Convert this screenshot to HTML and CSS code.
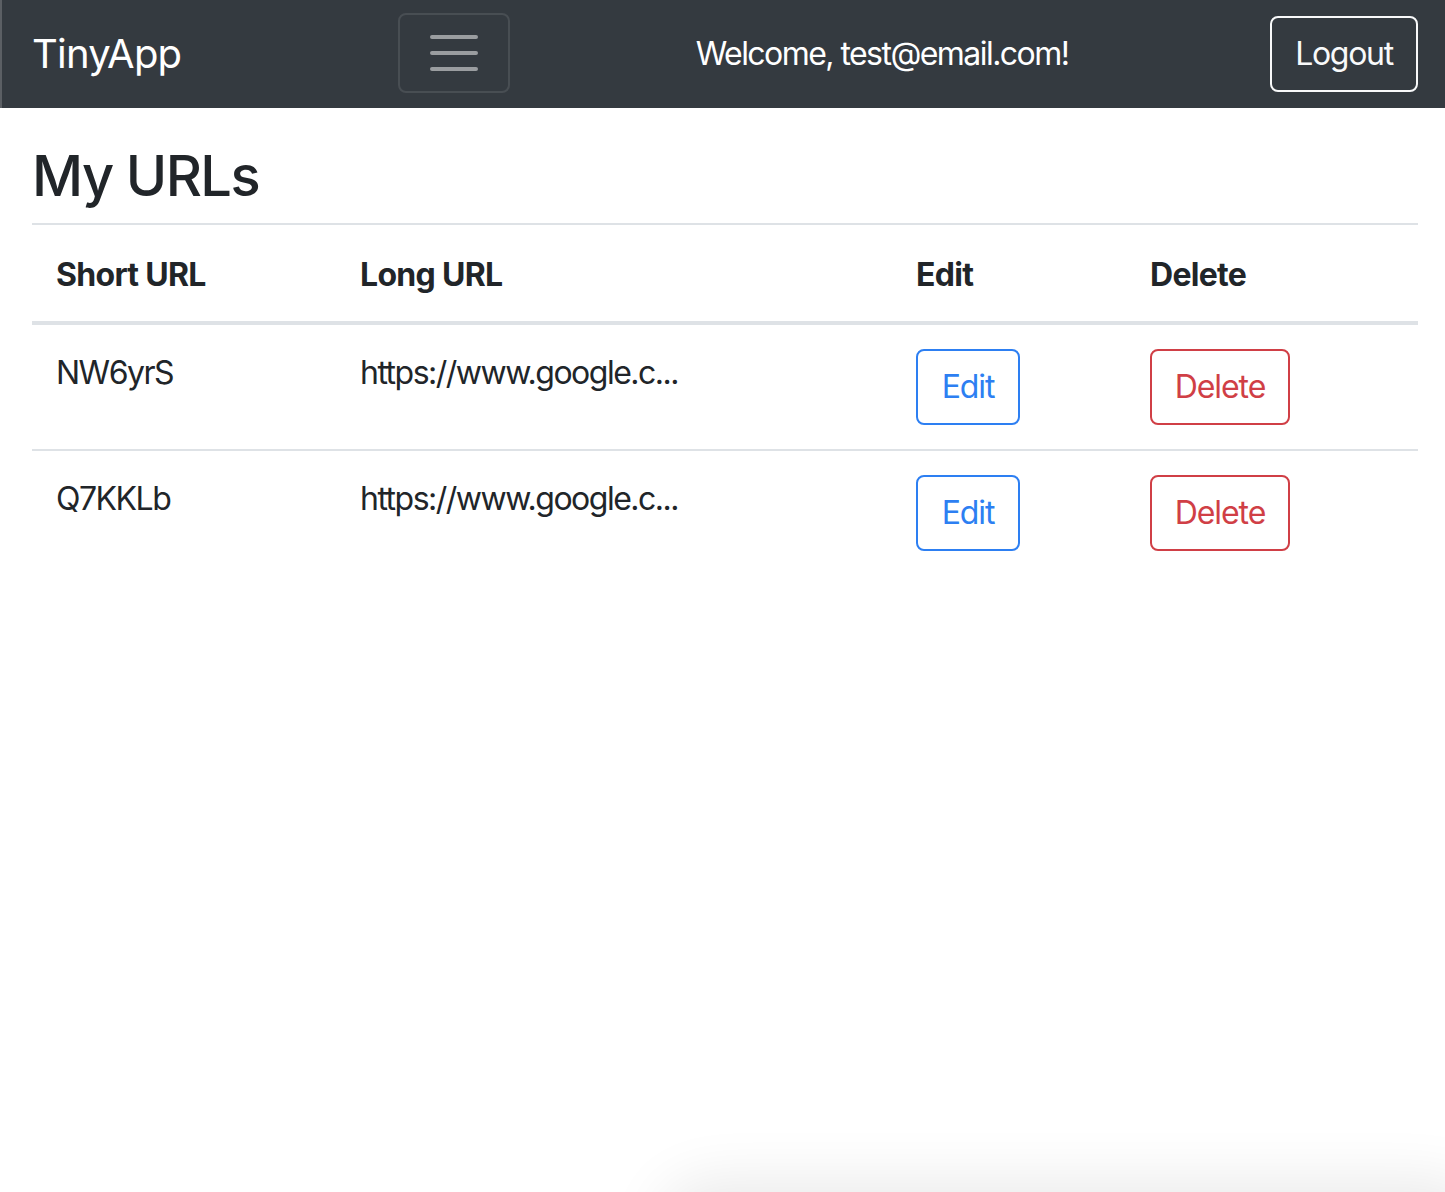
FILE: index.html
```html
<!DOCTYPE html>
<html lang="en">
<head>
<meta charset="utf-8">
<title>TinyApp</title>
<link rel="stylesheet" href="styles.css">
</head>
<body>
<nav class="navbar">
  <a class="brand" href="#">TinyApp</a>
  <button class="toggler" type="button" aria-label="Toggle navigation">
    <svg class="toggler-icon" viewBox="0 0 30 30" width="60" height="60">
      <path stroke="rgba(255,255,255,0.5)" stroke-linecap="round" stroke-miterlimit="10" stroke-width="2" d="M4 7h22M4 15h22M4 23h22"/>
    </svg>
  </button>
  <span class="welcome">Welcome, test@email.com!</span>
  <button class="btn-logout" type="button">Logout</button>
</nav>
<main class="container">
  <h2 class="title">My URLs</h2>
  <table class="table">
    <thead>
      <tr>
        <th class="c-short">Short URL</th>
        <th class="c-long">Long URL</th>
        <th class="c-edit">Edit</th>
        <th class="c-del">Delete</th>
      </tr>
    </thead>
    <tbody>
      <tr>
        <td>NW6yrS</td>
        <td>https://www.google.c...</td>
        <td><button class="btn btn-primary" type="button">Edit</button></td>
        <td><button class="btn btn-danger" type="button">Delete</button></td>
      </tr>
      <tr>
        <td>Q7KKLb</td>
        <td>https://www.google.c...</td>
        <td><button class="btn btn-primary" type="button">Edit</button></td>
        <td><button class="btn btn-danger" type="button">Delete</button></td>
      </tr>
    </tbody>
  </table>
</main>
<div class="corner-shadow"></div>
</body>
</html>
```

FILE: styles.css
```css
* { box-sizing: border-box; }
html, body { height: 100%; overflow: hidden; }
body {
  margin: 0;
  font-family: Inter, "Noto Sans", "Liberation Sans", sans-serif;
  font-size: 32px;
  line-height: 1.5;
  color: #212529;
  background: #fff;
}
.navbar {
  display: flex;
  align-items: center;
  height: 108px;
  padding: 0 27px 0 32px;
  background: #343a40;
  box-shadow: inset 2px 0 0 #5b5f64;
}
.brand {
  width: 366px;
  color: #fff;
  text-decoration: none;
  font-size: 40px;
  line-height: 1.5;
  letter-spacing: -0.8px;
}
.toggler {
  width: 112px;
  height: 80px;
  margin-top: -2px;
  padding: 8px 24px;
  background: transparent;
  border: 2px solid rgba(255,255,255,0.1);
  border-radius: 8px;
  display: flex;
  align-items: center;
  justify-content: center;
}
.toggler-icon { display: block; }
.welcome {
  flex: 1;
  text-align: center;
  padding-right: 16px;
  color: #fff;
  font-size: 32px;
  letter-spacing: -1.55px;
}
.btn-logout {
  font-family: inherit;
  font-size: 32px;
  line-height: 1.5;
  color: #f8f9fa;
  background: transparent;
  border: 2px solid #f8f9fa;
  border-radius: 8px;
  padding: 0;
  width: 148px;
  height: 76px;
  margin-top: -1px;
  letter-spacing: -1.3px;
}
.container {
  padding: 0 27px 0 32px;
}
.title {
  margin: 35px 0 13px;
  font-size: 56px;
  font-weight: 500;
  line-height: 1.2;
  letter-spacing: -1.6px;
}
.table {
  width: 100%;
  border-collapse: collapse;
  table-layout: fixed;
}
.table th, .table td {
  padding: 24px;
  text-align: left;
  vertical-align: top;
  border-top: 2px solid #dee2e6;
  letter-spacing: -1.5px;
}
.table th { font-weight: 700; vertical-align: bottom; border-bottom: 4px solid #dee2e6; letter-spacing: -0.7px; padding-top: 26px; padding-bottom: 22px; }
.c-short { width: 304px; }
.c-long { width: 556px; }
.c-edit { width: 234px; }
.btn {
  font-family: inherit;
  font-size: 32px;
  line-height: 1.5;
  background: transparent;
  border: 2px solid;
  border-radius: 8px;
  padding: 0;
  height: 76px;
  letter-spacing: -1.1px;
}
.btn-primary { color: #2d7ff2; border-color: #2d7ff2; width: 104px; }
.btn-danger { color: #d03f46; border-color: #d03f46; width: 140px; }
.corner-shadow {
  position: fixed;
  left: 660px;
  right: -40px;
  bottom: -100px;
  height: 100px;
  border-radius: 60px;
  box-shadow: 0 -10px 60px rgba(0,0,0,0.09);
}
```
